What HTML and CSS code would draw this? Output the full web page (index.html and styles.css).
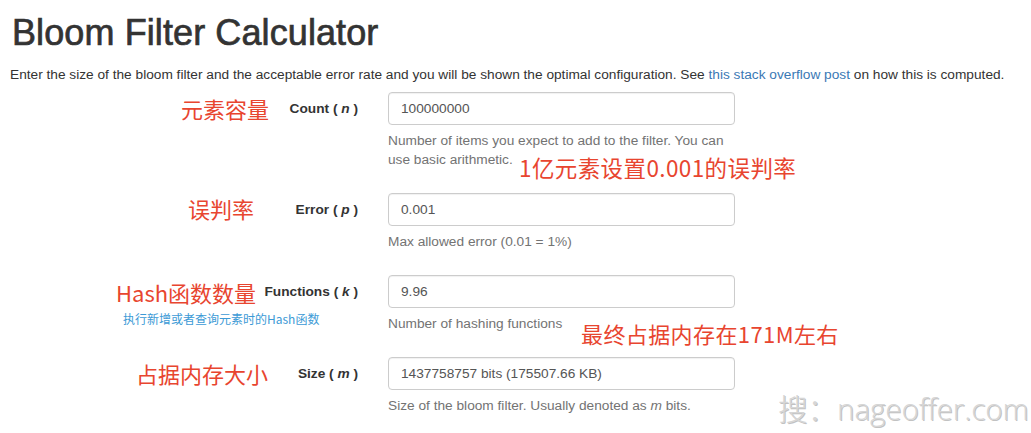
FILE: index.html
```html
<!DOCTYPE html>
<html lang="en">
<head>
<meta charset="utf-8">
<title>Bloom Filter Calculator</title>
<link rel="stylesheet" href="styles.css">
</head>
<body>
<div class="page">
  <h1 class="title">Bloom Filter Calculator</h1>
  <p class="intro">Enter the size of the bloom filter and the acceptable error rate and you will be shown the optimal configuration. See <a href="#" class="link">this stack overflow post</a> on how this is computed.</p>
</div>
<form class="calc">
  <div class="form-row">
    <label class="field-label">Count ( <em>n</em> )</label>
    <div class="field">
      <div class="input">100000000</div>
      <p class="help">Number of items you expect to add to the filter. You can use basic arithmetic.</p>
    </div>
    <span class="note note-count">元素容量</span>
    <span class="note note-count-side">1亿元素设置0.001的误判率</span>
  </div>
  <div class="form-row">
    <label class="field-label">Error ( <em>p</em> )</label>
    <div class="field">
      <div class="input">0.001</div>
      <p class="help">Max allowed error (0.01 = 1%)</p>
    </div>
    <span class="note note-error">误判率</span>
  </div>
  <div class="form-row">
    <label class="field-label">Functions ( <em>k</em> )</label>
    <div class="field">
      <div class="input">9.96</div>
      <p class="help">Number of hashing functions</p>
    </div>
    <span class="note note-hash">Hash函数数量</span>
    <span class="note-small">执行新增或者查询元素时的Hash函数</span>
    <span class="note note-hash-side">最终占据内存在171M左右</span>
  </div>
  <div class="form-row">
    <label class="field-label">Size ( <em>m</em> )</label>
    <div class="field">
      <div class="input">1437758757 bits (175507.66 KB)</div>
      <p class="help">Size of the bloom filter. Usually denoted as <em>m</em> bits.</p>
    </div>
    <span class="note note-size">占据内存大小</span>
  </div>
</form>
<div class="watermark">搜：nageoffer.com</div>
</body>
</html>
```
FILE: styles.css
```css
html, body {
  margin: 0;
  padding: 0;
  background: #ffffff;
}
body {
  font-family: "Liberation Sans", Arial, "Noto Sans CJK SC", sans-serif;
  color: #333333;
  font-size: 13.7px;
  position: relative;
  width: 1031px;
  height: 433px;
  overflow: hidden;
}
.page {
  padding: 0 10px;
}
.title {
  margin: 0;
  padding-top: 13px;
  font-size: 36px;
  line-height: 40px;
  font-weight: 500;
  color: #333333;
  -webkit-text-stroke: 0.7px #333333;
  letter-spacing: 0.1px;
  padding-left: 2px;
}
.intro {
  margin: 12px 0 0;
  font-size: 13.7px;
  line-height: 19px;
  color: #333333;
}
.link {
  color: #3a79b5;
  text-decoration: none;
}
.calc {
  margin-top: 8px;
}
.form-row {
  position: relative;
  display: grid;
  grid-template-columns: 358px 347px;
  column-gap: 30px;
  margin-bottom: 24px;
}
.field-label {
  text-align: right;
  font-weight: bold;
  font-size: 13.7px;
  line-height: 33px;
  color: #333333;
}
.field-label em {
  font-style: italic;
}
.input {
  height: 33px;
  box-sizing: border-box;
  border: 1px solid #cccccc;
  border-radius: 4px;
  padding: 0 12px;
  font-size: 13.7px;
  line-height: 31px;
  color: #555555;
  box-shadow: inset 0 1px 1px rgba(0,0,0,0.06);
}
.help {
  margin: 6px 0 0;
  font-size: 13.7px;
  line-height: 19px;
  color: #737373;
}
.note {
  position: absolute;
  font-family: "Noto Sans CJK SC", sans-serif;
  font-size: 22px;
  line-height: 30px;
  color: #e8452f;
  white-space: nowrap;
}
.note-count { left: 181px; top: 1px; }
.note-count-side { left: 519px; top: 62px; font-size: 22.5px; line-height: 26px; letter-spacing: 0.4px; }
.note-error { left: 188px; top: 0px; }
.note-hash { left: 116px; top: 2px; }
.note-hash-side { left: 581px; top: 43px; letter-spacing: 0.4px; }
.note-size { left: 136px; top: 1px; }
.note-small {
  position: absolute;
  left: 123px;
  top: 36px;
  font-family: "Noto Sans CJK SC", sans-serif;
  font-size: 12px;
  line-height: 16px;
  color: #3c9ad6;
  white-space: nowrap;
}
.watermark {
  position: absolute;
  left: 778px;
  top: 391px;
  font-family: "Open Sans", "Noto Sans CJK SC", sans-serif;
  font-weight: 300;
  font-size: 29.5px;
  line-height: 36px;
  color: #d6d6d6;
  text-shadow: 1px 1px 0 #c2c2c2;
  white-space: nowrap;
}
```
